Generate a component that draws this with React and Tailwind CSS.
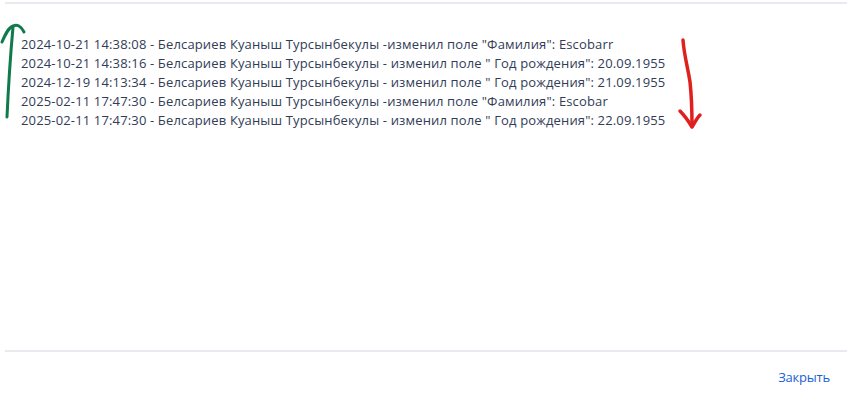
export default function App() {
  const lines = [
    '2024-10-21 14:38:08 - Белсариев Куаныш Турсынбекулы -изменил поле "Фамилия": Escobarr',
    '2024-10-21 14:38:16 - Белсариев Куаныш Турсынбекулы - изменил поле " Год рождения": 20.09.1955',
    '2024-12-19 14:13:34 - Белсариев Куаныш Турсынбекулы - изменил поле " Год рождения": 21.09.1955',
    '2025-02-11 17:47:30 - Белсариев Куаныш Турсынбекулы -изменил поле "Фамилия": Escobar',
    '2025-02-11 17:47:30 - Белсариев Куаныш Турсынбекулы - изменил поле " Год рождения": 22.09.1955',
  ];
  return (
    <div
      className="relative w-[847px] h-[396px] bg-white overflow-hidden flex flex-col"
      style={{ fontFamily: '"Open Sans", "Noto Sans", sans-serif' }}
    >
      <div className="shrink-0 mt-[2px] ml-[5px] h-[348px] border-t-2 border-[#e9e9ef] flex flex-col">
        <div className="pl-[16px] pt-[31px] flex flex-col text-[13px] leading-[19px] tracking-[0.15px] text-[#323c57]">
          {lines.map((l, i) => (
            <div key={i} className="whitespace-pre">{l}</div>
          ))}
        </div>
      </div>
      <div className="shrink-0 ml-[5px] border-t-2 border-[#e9e9ef] h-[44px] flex items-start justify-end pt-[19px] pr-[17px]">
        <button className="text-[13px] text-[#1a5fd6] leading-none tracking-[-0.2px]">Закрыть</button>
      </div>

      <svg className="absolute left-0 top-0" width="847" height="396" viewBox="0 0 847 396" fill="none">
        <path
          d="M7 117 C 8 95, 10 60, 13 27"
          stroke="#0f7a4c"
          strokeWidth="3"
          strokeLinecap="round"
        />
        <path
          d="M2 42 C 5 35, 8 28, 13 26 C 17 24, 21 26, 24 32"
          stroke="#0f7a4c"
          strokeWidth="3"
          strokeLinecap="round"
          strokeLinejoin="round"
        />
        <path
          d="M683 40 C 684 55, 688 68, 690 82 C 692 100, 692 115, 692 126"
          stroke="#e0201f"
          strokeWidth="3.5"
          strokeLinecap="round"
        />
        <path
          d="M680 111 C 685 116, 689 122, 692 127 C 695 122, 697 118, 700 115"
          stroke="#e0201f"
          strokeWidth="3.5"
          strokeLinecap="round"
          strokeLinejoin="round"
        />
      </svg>
    </div>
  );
}
